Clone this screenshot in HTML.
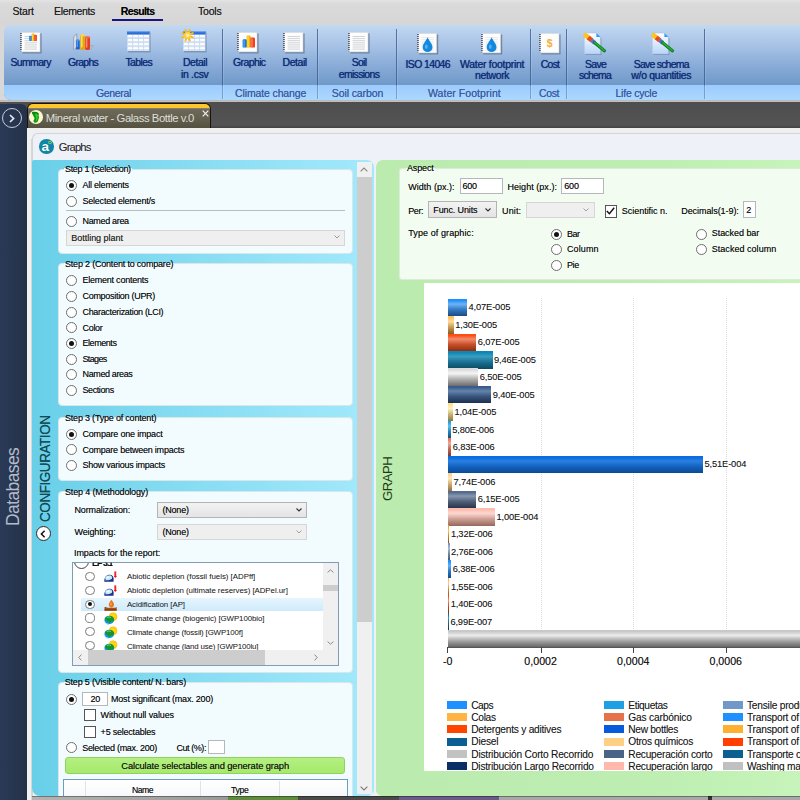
<!DOCTYPE html>
<html lang="en"><head><meta charset="utf-8"><title>Graphs</title>
<style>
html,body{margin:0;padding:0;}
body{width:800px;height:800px;overflow:hidden;background:#d8d8d8;font-family:"Liberation Sans",sans-serif;}
#root{position:relative;width:800px;height:800px;overflow:hidden;}
.a{position:absolute;box-sizing:border-box;}
.t{position:absolute;white-space:nowrap;font-family:"Liberation Sans",sans-serif;text-shadow:0 0 .45px rgba(0,0,0,.5);}
.v{position:absolute;white-space:nowrap;transform-origin:0 0;transform:rotate(-90deg);font-family:"Liberation Sans",sans-serif;}
.rb{position:absolute;box-sizing:border-box;border-radius:50%;border:1.15px solid #6e6e6e;background:#fff;}
.rb.on::after{content:"";position:absolute;left:50%;top:50%;width:5px;height:5px;margin:-2.5px 0 0 -2.5px;border-radius:50%;background:#111;}
.gb{position:absolute;box-sizing:border-box;background:#f2fbfe;border:1px solid #d9e6ea;border-radius:4px;}
.cb{position:absolute;box-sizing:border-box;background:#fff;border:1px solid #555;}
.tb{position:absolute;box-sizing:border-box;background:#fff;border:1px solid #b4b8bc;}
.combo{position:absolute;box-sizing:border-box;border:1px solid #b4b4b4;background:linear-gradient(#f3f3f3,#e4e4e4);}
.combo.dis{border-color:#d6d6d6;background:#efefef;}
svg{position:absolute;overflow:visible;}
.rb.sm{border-width:1px;border-color:#7a7a7a;}
.rb.sm.on::after{width:4px;height:4px;margin:-2px 0 0 -2px;}
</style></head><body>
<div id="root">
<div class="a " style="left:0px;top:0px;width:800px;height:26px;background:linear-gradient(#e3e3e3 0,#dadada 4px,#d6d6d6 100%);"></div>
<div class="a " style="left:112px;top:19.3px;width:51px;height:1.7px;background:#15158a;"></div>
<div class="a " style="left:4px;top:24.6px;width:796px;height:75.1px;border-radius:6px 0 0 7px;background:linear-gradient(#c2d8f2 0px,#a8c3e6 20px,#8aacd8 40px,#6f99c9 60px,#6f99c9 100%);"></div>
<div class="a " style="left:4px;top:85.2px;width:796px;height:14.5px;border-radius:0 0 0 7px;background:linear-gradient(#9ccafb,#acd8ff);"></div>
<div class="a " style="left:222.0px;top:29px;width:1.0px;height:69.6px;background:linear-gradient(rgba(58,92,148,.8) 0,rgba(58,92,148,.8) 56px,rgba(96,136,196,.7) 57px);"></div>
<div class="a " style="left:223.0px;top:29px;width:1.0px;height:69.8px;background:rgba(255,255,255,.12);"></div>
<div class="a " style="left:317.0px;top:29px;width:1.0px;height:69.6px;background:linear-gradient(rgba(58,92,148,.8) 0,rgba(58,92,148,.8) 56px,rgba(96,136,196,.7) 57px);"></div>
<div class="a " style="left:318.0px;top:29px;width:1.0px;height:69.8px;background:rgba(255,255,255,.12);"></div>
<div class="a " style="left:396.25px;top:29px;width:1.0px;height:69.6px;background:linear-gradient(rgba(58,92,148,.8) 0,rgba(58,92,148,.8) 56px,rgba(96,136,196,.7) 57px);"></div>
<div class="a " style="left:397.25px;top:29px;width:1.0px;height:69.8px;background:rgba(255,255,255,.12);"></div>
<div class="a " style="left:530.0px;top:29px;width:1.0px;height:69.6px;background:linear-gradient(rgba(58,92,148,.8) 0,rgba(58,92,148,.8) 56px,rgba(96,136,196,.7) 57px);"></div>
<div class="a " style="left:531.0px;top:29px;width:1.0px;height:69.8px;background:rgba(255,255,255,.12);"></div>
<div class="a " style="left:565.75px;top:29px;width:1.0px;height:69.6px;background:linear-gradient(rgba(58,92,148,.8) 0,rgba(58,92,148,.8) 56px,rgba(96,136,196,.7) 57px);"></div>
<div class="a " style="left:566.75px;top:29px;width:1.0px;height:69.8px;background:rgba(255,255,255,.12);"></div>
<div class="a " style="left:703.5px;top:29px;width:1.0px;height:69.6px;background:linear-gradient(rgba(58,92,148,.8) 0,rgba(58,92,148,.8) 56px,rgba(96,136,196,.7) 57px);"></div>
<div class="a " style="left:704.5px;top:29px;width:1.0px;height:69.8px;background:rgba(255,255,255,.12);"></div>
<svg style="left:20px;top:31.6px" width="23" height="23.5" viewBox="0 0 23 23.5"><rect x="2.2" y="1.4" width="19.4" height="20.1" fill="#5f7391" opacity=".75"/><rect x="1.2" y=".4" width="18.8" height="19.5" fill="#fdfdfd"/><rect x="1.2" y=".4" width="18.8" height="19.5" fill="none" stroke="#d2d6dc" stroke-width=".6"/><line x1=".9" y1="1.00" x2=".9" y2="19.3" stroke="#5c6068" stroke-width="1.8" stroke-dasharray="1 1"/><line x1="4.6" y1="4.5" x2="17" y2="4.5" stroke="#c4c8cc" stroke-width=".8"/><line x1="4.6" y1="6.6" x2="17" y2="6.6" stroke="#c4c8cc" stroke-width=".8"/><line x1="4.6" y1="8.7" x2="17" y2="8.7" stroke="#c4c8cc" stroke-width=".8"/><line x1="4.6" y1="10.8" x2="17" y2="10.8" stroke="#c4c8cc" stroke-width=".8"/><line x1="4.6" y1="12.9" x2="17" y2="12.9" stroke="#c4c8cc" stroke-width=".8"/><line x1="4.6" y1="15.0" x2="17" y2="15.0" stroke="#c4c8cc" stroke-width=".8"/><line x1="4.6" y1="17.1" x2="17" y2="17.1" stroke="#c4c8cc" stroke-width=".8"/><rect x="9.2" y="3.8" width="2.7" height="5.2" rx="0.7" fill="#1a78d8"/><rect x="9.6" y="4.2" width="1.0" height="4.6" rx="0.4" fill="#5cb0f4" opacity=".75"/><rect x="11.7" y="1.6" width="2.6" height="7.4" rx="0.7" fill="#f4b800"/><rect x="12.1" y="2.0" width="0.9" height="6.8" rx="0.4" fill="#fce46c" opacity=".75"/><rect x="14.0" y="2.8" width="2.9" height="6.2" rx="0.7" fill="#f0401c"/><rect x="14.5" y="3.2" width="1.0" height="5.6" rx="0.4" fill="#fc8c64" opacity=".75"/></svg>
<svg style="left:73.4px;top:33.2px" width="22.400000000000002" height="20.160000000000004" viewBox="0 0 20 18"><path d="M.6 14.6 L.6 3.6 L3.4 .6 L3.4 11.6 L18 11.6 L15.4 14.6Z" fill="#dfe3ea" stroke="#8892a4" stroke-width=".7"/><path d="M3.4 11.6 L18 11.6 L15.4 14.8 L.6 14.8Z" fill="#b4bccb"/><rect x="2.6" y="6.6" width="3.4" height="7" fill="#1c64d0"/><rect x="3.2" y="6.6" width="1.2" height="7" fill="#6cacf4" opacity=".8"/><ellipse cx="4.3" cy="13.6" rx="1.7" ry="1.1" fill="#1c64d0"/><ellipse cx="4.3" cy="6.6" rx="1.7" ry="1.1" fill="#4c90e8"/><rect x="6.4" y="2" width="4.2" height="11.8" fill="#e4a800"/><rect x="7.0" y="2" width="1.5" height="11.8" fill="#fce888" opacity=".8"/><ellipse cx="8.5" cy="13.8" rx="2.1" ry="1.1" fill="#e4a800"/><ellipse cx="8.5" cy="2" rx="2.1" ry="1.1" fill="#f8d458"/><rect x="10.8" y="3.8" width="4.4" height="10.2" fill="#e43c1c"/><rect x="11.4" y="3.8" width="1.5" height="10.2" fill="#fc9c7c" opacity=".8"/><ellipse cx="13.0" cy="14.0" rx="2.2" ry="1.1" fill="#e43c1c"/><ellipse cx="13.0" cy="3.8" rx="2.2" ry="1.1" fill="#f46c4c"/></svg>
<svg style="left:126.8px;top:31.3px" width="24.6" height="23" viewBox="0 0 24.6 23"><rect x="1" y="1.4" width="22.6" height="20" fill="#5f7391" opacity=".55"/><rect x="0" y="0" width="22.6" height="20" fill="#b4cbea"/><rect x="0" y="0" width="22.6" height="3.4" fill="#2a6ed8"/><rect x="0" y="0" width="22.6" height="1.2" fill="#6ca4f0"/><rect x="0.60" y="4.00" width="4.80" height="3.35" fill="#ffffff"/><rect x="0.60" y="5.84" width="4.80" height="1.51" fill="#d4e2f4"/><rect x="6.10" y="4.00" width="4.80" height="3.35" fill="#ffffff"/><rect x="6.10" y="5.84" width="4.80" height="1.51" fill="#d4e2f4"/><rect x="11.60" y="4.00" width="4.80" height="3.35" fill="#ffffff"/><rect x="11.60" y="5.84" width="4.80" height="1.51" fill="#d4e2f4"/><rect x="17.10" y="4.00" width="4.80" height="3.35" fill="#ffffff"/><rect x="17.10" y="5.84" width="4.80" height="1.51" fill="#d4e2f4"/><rect x="0.60" y="8.05" width="4.80" height="3.35" fill="#ffffff"/><rect x="0.60" y="9.89" width="4.80" height="1.51" fill="#d4e2f4"/><rect x="6.10" y="8.05" width="4.80" height="3.35" fill="#ffffff"/><rect x="6.10" y="9.89" width="4.80" height="1.51" fill="#d4e2f4"/><rect x="11.60" y="8.05" width="4.80" height="3.35" fill="#ffffff"/><rect x="11.60" y="9.89" width="4.80" height="1.51" fill="#d4e2f4"/><rect x="17.10" y="8.05" width="4.80" height="3.35" fill="#ffffff"/><rect x="17.10" y="9.89" width="4.80" height="1.51" fill="#d4e2f4"/><rect x="0.60" y="12.10" width="4.80" height="3.35" fill="#ffffff"/><rect x="0.60" y="13.94" width="4.80" height="1.51" fill="#d4e2f4"/><rect x="6.10" y="12.10" width="4.80" height="3.35" fill="#ffffff"/><rect x="6.10" y="13.94" width="4.80" height="1.51" fill="#d4e2f4"/><rect x="11.60" y="12.10" width="4.80" height="3.35" fill="#ffffff"/><rect x="11.60" y="13.94" width="4.80" height="1.51" fill="#d4e2f4"/><rect x="17.10" y="12.10" width="4.80" height="3.35" fill="#ffffff"/><rect x="17.10" y="13.94" width="4.80" height="1.51" fill="#d4e2f4"/><rect x="0.60" y="16.15" width="4.80" height="3.35" fill="#ffffff"/><rect x="0.60" y="17.99" width="4.80" height="1.51" fill="#d4e2f4"/><rect x="6.10" y="16.15" width="4.80" height="3.35" fill="#ffffff"/><rect x="6.10" y="17.99" width="4.80" height="1.51" fill="#d4e2f4"/><rect x="11.60" y="16.15" width="4.80" height="3.35" fill="#ffffff"/><rect x="11.60" y="17.99" width="4.80" height="1.51" fill="#d4e2f4"/><rect x="17.10" y="16.15" width="4.80" height="3.35" fill="#ffffff"/><rect x="17.10" y="17.99" width="4.80" height="1.51" fill="#d4e2f4"/></svg>
<svg style="left:183px;top:31.3px" width="24.6" height="23" viewBox="0 0 24.6 23"><rect x="1" y="1.4" width="22.6" height="20" fill="#5f7391" opacity=".55"/><rect x="0" y="0" width="22.6" height="20" fill="#b4cbea"/><rect x="0" y="0" width="22.6" height="3.4" fill="#2a6ed8"/><rect x="0" y="0" width="22.6" height="1.2" fill="#6ca4f0"/><rect x="0.60" y="4.00" width="4.80" height="3.35" fill="#ffffff"/><rect x="0.60" y="5.84" width="4.80" height="1.51" fill="#d4e2f4"/><rect x="6.10" y="4.00" width="4.80" height="3.35" fill="#ffffff"/><rect x="6.10" y="5.84" width="4.80" height="1.51" fill="#d4e2f4"/><rect x="11.60" y="4.00" width="4.80" height="3.35" fill="#ffffff"/><rect x="11.60" y="5.84" width="4.80" height="1.51" fill="#d4e2f4"/><rect x="17.10" y="4.00" width="4.80" height="3.35" fill="#ffffff"/><rect x="17.10" y="5.84" width="4.80" height="1.51" fill="#d4e2f4"/><rect x="0.60" y="8.05" width="4.80" height="3.35" fill="#ffffff"/><rect x="0.60" y="9.89" width="4.80" height="1.51" fill="#d4e2f4"/><rect x="6.10" y="8.05" width="4.80" height="3.35" fill="#ffffff"/><rect x="6.10" y="9.89" width="4.80" height="1.51" fill="#d4e2f4"/><rect x="11.60" y="8.05" width="4.80" height="3.35" fill="#ffffff"/><rect x="11.60" y="9.89" width="4.80" height="1.51" fill="#d4e2f4"/><rect x="17.10" y="8.05" width="4.80" height="3.35" fill="#ffffff"/><rect x="17.10" y="9.89" width="4.80" height="1.51" fill="#d4e2f4"/><rect x="0.60" y="12.10" width="4.80" height="3.35" fill="#ffffff"/><rect x="0.60" y="13.94" width="4.80" height="1.51" fill="#d4e2f4"/><rect x="6.10" y="12.10" width="4.80" height="3.35" fill="#ffffff"/><rect x="6.10" y="13.94" width="4.80" height="1.51" fill="#d4e2f4"/><rect x="11.60" y="12.10" width="4.80" height="3.35" fill="#ffffff"/><rect x="11.60" y="13.94" width="4.80" height="1.51" fill="#d4e2f4"/><rect x="17.10" y="12.10" width="4.80" height="3.35" fill="#ffffff"/><rect x="17.10" y="13.94" width="4.80" height="1.51" fill="#d4e2f4"/><rect x="0.60" y="16.15" width="4.80" height="3.35" fill="#ffffff"/><rect x="0.60" y="17.99" width="4.80" height="1.51" fill="#d4e2f4"/><rect x="6.10" y="16.15" width="4.80" height="3.35" fill="#ffffff"/><rect x="6.10" y="17.99" width="4.80" height="1.51" fill="#d4e2f4"/><rect x="11.60" y="16.15" width="4.80" height="3.35" fill="#ffffff"/><rect x="11.60" y="17.99" width="4.80" height="1.51" fill="#d4e2f4"/><rect x="17.10" y="16.15" width="4.80" height="3.35" fill="#ffffff"/><rect x="17.10" y="17.99" width="4.80" height="1.51" fill="#d4e2f4"/><line x1="4.6" y1="4.2" x2="9.77" y2="6.34" stroke="#fbb822" stroke-width="2" stroke-linecap="round"/><line x1="4.6" y1="4.2" x2="6.74" y2="9.37" stroke="#fbb822" stroke-width="2" stroke-linecap="round"/><line x1="4.6" y1="4.2" x2="2.46" y2="9.37" stroke="#fbb822" stroke-width="2" stroke-linecap="round"/><line x1="4.6" y1="4.2" x2="-0.57" y2="6.34" stroke="#fbb822" stroke-width="2" stroke-linecap="round"/><line x1="4.6" y1="4.2" x2="-0.57" y2="2.06" stroke="#fbb822" stroke-width="2" stroke-linecap="round"/><line x1="4.6" y1="4.2" x2="2.46" y2="-0.97" stroke="#fbb822" stroke-width="2" stroke-linecap="round"/><line x1="4.6" y1="4.2" x2="6.74" y2="-0.97" stroke="#fbb822" stroke-width="2" stroke-linecap="round"/><line x1="4.6" y1="4.2" x2="9.77" y2="2.06" stroke="#fbb822" stroke-width="2" stroke-linecap="round"/><circle cx="4.6" cy="4.2" r="3.4" fill="#ffcf3a"/><circle cx="4.6" cy="4.2" r="1.7" fill="#fff0a8"/></svg>
<svg style="left:237.4px;top:31.6px" width="23" height="23.5" viewBox="0 0 23 23.5"><rect x="2.2" y="1.4" width="19.4" height="20.1" fill="#5f7391" opacity=".75"/><rect x="1.2" y=".4" width="18.8" height="19.5" fill="#fdfdfd"/><rect x="1.2" y=".4" width="18.8" height="19.5" fill="none" stroke="#d2d6dc" stroke-width=".6"/><line x1=".9" y1="1.00" x2=".9" y2="19.3" stroke="#5c6068" stroke-width="1.8" stroke-dasharray="1 1"/><rect x="5.6" y="7.2" width="4.4" height="8.4" rx="1.2" fill="#1a78d8"/><rect x="6.3" y="7.8" width="1.5" height="7.4" rx="0.6" fill="#5cb0f4" opacity=".75"/><rect x="9.6" y="3.6" width="4.2" height="12.0" rx="1.2" fill="#f4b800"/><rect x="10.3" y="4.2" width="1.5" height="11.0" rx="0.6" fill="#fce46c" opacity=".75"/><rect x="13.4" y="5.6" width="4.6" height="10.0" rx="1.2" fill="#f0401c"/><rect x="14.1" y="6.2" width="1.6" height="9.0" rx="0.6" fill="#fc8c64" opacity=".75"/></svg>
<svg style="left:283.2px;top:31.6px" width="23" height="23.5" viewBox="0 0 23 23.5"><rect x="2.2" y="1.4" width="19.4" height="20.1" fill="#5f7391" opacity=".75"/><rect x="1.2" y=".4" width="18.8" height="19.5" fill="#fdfdfd"/><rect x="1.2" y=".4" width="18.8" height="19.5" fill="none" stroke="#d2d6dc" stroke-width=".6"/><line x1=".9" y1="1.00" x2=".9" y2="19.3" stroke="#5c6068" stroke-width="1.8" stroke-dasharray="1 1"/><line x1="4.6" y1="4.5" x2="17" y2="4.5" stroke="#c4c8cc" stroke-width=".8"/><line x1="4.6" y1="6.6" x2="17" y2="6.6" stroke="#c4c8cc" stroke-width=".8"/><line x1="4.6" y1="8.7" x2="17" y2="8.7" stroke="#c4c8cc" stroke-width=".8"/><line x1="4.6" y1="10.8" x2="17" y2="10.8" stroke="#c4c8cc" stroke-width=".8"/><line x1="4.6" y1="12.9" x2="17" y2="12.9" stroke="#c4c8cc" stroke-width=".8"/><line x1="4.6" y1="15.0" x2="17" y2="15.0" stroke="#c4c8cc" stroke-width=".8"/><line x1="4.6" y1="17.1" x2="17" y2="17.1" stroke="#c4c8cc" stroke-width=".8"/></svg>
<svg style="left:347.6px;top:31.6px" width="23" height="23.5" viewBox="0 0 23 23.5"><rect x="2.2" y="1.4" width="19.4" height="20.1" fill="#5f7391" opacity=".75"/><rect x="1.2" y=".4" width="18.8" height="19.5" fill="#fdfdfd"/><rect x="1.2" y=".4" width="18.8" height="19.5" fill="none" stroke="#d2d6dc" stroke-width=".6"/><line x1=".9" y1="1.00" x2=".9" y2="19.3" stroke="#5c6068" stroke-width="1.8" stroke-dasharray="1 1"/><line x1="4.6" y1="4.5" x2="17" y2="4.5" stroke="#c4c8cc" stroke-width=".8"/><line x1="4.6" y1="6.6" x2="17" y2="6.6" stroke="#c4c8cc" stroke-width=".8"/><line x1="4.6" y1="8.7" x2="17" y2="8.7" stroke="#c4c8cc" stroke-width=".8"/><line x1="4.6" y1="10.8" x2="17" y2="10.8" stroke="#c4c8cc" stroke-width=".8"/><line x1="4.6" y1="12.9" x2="17" y2="12.9" stroke="#c4c8cc" stroke-width=".8"/><line x1="4.6" y1="15.0" x2="17" y2="15.0" stroke="#c4c8cc" stroke-width=".8"/><line x1="4.6" y1="17.1" x2="17" y2="17.1" stroke="#c4c8cc" stroke-width=".8"/></svg>
<svg style="left:416.8px;top:33.3px" width="22.6" height="23.5" viewBox="0 0 22.6 23.5"><rect x="2.2" y="1.4" width="19.0" height="20.1" fill="#5f7391" opacity=".75"/><rect x="1.2" y=".4" width="18.400000000000002" height="19.5" fill="#fdfdfd"/><rect x="1.2" y=".4" width="18.400000000000002" height="19.5" fill="none" stroke="#d2d6dc" stroke-width=".6"/><line x1=".9" y1="1.00" x2=".9" y2="19.3" stroke="#5c6068" stroke-width="1.8" stroke-dasharray="1 1"/><line x1="4.6" y1="4.5" x2="16.6" y2="4.5" stroke="#dfe2e6" stroke-width=".8"/><line x1="4.6" y1="6.6" x2="16.6" y2="6.6" stroke="#dfe2e6" stroke-width=".8"/><line x1="4.6" y1="8.7" x2="16.6" y2="8.7" stroke="#dfe2e6" stroke-width=".8"/><line x1="4.6" y1="10.8" x2="16.6" y2="10.8" stroke="#dfe2e6" stroke-width=".8"/><line x1="4.6" y1="12.9" x2="16.6" y2="12.9" stroke="#dfe2e6" stroke-width=".8"/><line x1="4.6" y1="15.0" x2="16.6" y2="15.0" stroke="#dfe2e6" stroke-width=".8"/><line x1="4.6" y1="17.1" x2="16.6" y2="17.1" stroke="#dfe2e6" stroke-width=".8"/><path d="M10.6 4.4 C13.048 8.752 15.495999999999999 11.2 15.495999999999999 14.192 A4.896 4.896 0 0 1 5.704 14.192 C5.704 11.2 8.152 8.752 10.6 4.4Z" fill="#1488dc"/><ellipse cx="9.299999999999999" cy="13.648000000000001" rx="1.4" ry="2.2" fill="#5cc0fc" opacity=".8"/></svg>
<svg style="left:481.2px;top:33.3px" width="22.6" height="23.5" viewBox="0 0 22.6 23.5"><rect x="2.2" y="1.4" width="19.0" height="20.1" fill="#5f7391" opacity=".75"/><rect x="1.2" y=".4" width="18.400000000000002" height="19.5" fill="#fdfdfd"/><rect x="1.2" y=".4" width="18.400000000000002" height="19.5" fill="none" stroke="#d2d6dc" stroke-width=".6"/><line x1=".9" y1="1.00" x2=".9" y2="19.3" stroke="#5c6068" stroke-width="1.8" stroke-dasharray="1 1"/><line x1="4.6" y1="4.5" x2="16.6" y2="4.5" stroke="#dfe2e6" stroke-width=".8"/><line x1="4.6" y1="6.6" x2="16.6" y2="6.6" stroke="#dfe2e6" stroke-width=".8"/><line x1="4.6" y1="8.7" x2="16.6" y2="8.7" stroke="#dfe2e6" stroke-width=".8"/><line x1="4.6" y1="10.8" x2="16.6" y2="10.8" stroke="#dfe2e6" stroke-width=".8"/><line x1="4.6" y1="12.9" x2="16.6" y2="12.9" stroke="#dfe2e6" stroke-width=".8"/><line x1="4.6" y1="15.0" x2="16.6" y2="15.0" stroke="#dfe2e6" stroke-width=".8"/><line x1="4.6" y1="17.1" x2="16.6" y2="17.1" stroke="#dfe2e6" stroke-width=".8"/><path d="M10.6 4.4 C13.048 8.752 15.495999999999999 11.2 15.495999999999999 14.192 A4.896 4.896 0 0 1 5.704 14.192 C5.704 11.2 8.152 8.752 10.6 4.4Z" fill="#1488dc"/><ellipse cx="9.299999999999999" cy="13.648000000000001" rx="1.4" ry="2.2" fill="#5cc0fc" opacity=".8"/></svg>
<svg style="left:538.8px;top:33.3px" width="23" height="23.5" viewBox="0 0 23 23.5"><rect x="2.2" y="1.4" width="19.4" height="20.1" fill="#5f7391" opacity=".75"/><rect x="1.2" y=".4" width="18.8" height="19.5" fill="#fdfdfd"/><rect x="1.2" y=".4" width="18.8" height="19.5" fill="none" stroke="#d2d6dc" stroke-width=".6"/><line x1=".9" y1="1.00" x2=".9" y2="19.3" stroke="#5c6068" stroke-width="1.8" stroke-dasharray="1 1"/><text x="10.6" y="13.8" font-family="Liberation Sans, sans-serif" font-size="10.5" font-weight="bold" fill="#f8ac34" text-anchor="middle">$</text></svg>
<svg style="left:583.4px;top:31.8px" width="24" height="24" viewBox="0 0 24 24"><defs><linearGradient id="pg1" x1="0" y1="0" x2="0" y2="1"><stop offset="0" stop-color="#ffffff"/><stop offset="1" stop-color="#b8d4f8"/></linearGradient></defs><path d="M2.2 2 L14 2 L18.4 6.2 L18.4 23 L2.2 23Z" fill="#5f7391" opacity=".6"/><path d="M1.2 1 L13.4 1 L17.4 5 L17.4 22 L1.2 22Z" fill="url(#pg1)" stroke="#a8c0e0" stroke-width=".6"/><path d="M13.4 1 L17.4 5 L13.4 5Z" fill="#2c9cf0"/><line x1="2.6" y1="3.4" x2="5.4" y2="5.7" stroke="#fcc41c" stroke-width="4.8" stroke-linecap="round"/><line x1="5.2" y1="5.5" x2="8.8" y2="8.4" stroke="#e84c1c" stroke-width="4.6"/><line x1="8.6" y1="8.3" x2="11.8" y2="10.9" stroke="#4c70cc" stroke-width="4"/><line x1="11.6" y1="10.7" x2="21.4" y2="18.7" stroke="#0c7c1c" stroke-width="3.2" stroke-linecap="round"/><line x1="11.6" y1="10.5" x2="21.2" y2="18.3" stroke="#2cac3c" stroke-width="1.6" stroke-linecap="round"/></svg>
<svg style="left:650.6px;top:31.8px" width="24" height="24" viewBox="0 0 24 24"><defs><linearGradient id="pg2" x1="0" y1="0" x2="0" y2="1"><stop offset="0" stop-color="#ffffff"/><stop offset="1" stop-color="#b8d4f8"/></linearGradient></defs><path d="M2.2 2 L14 2 L18.4 6.2 L18.4 23 L2.2 23Z" fill="#5f7391" opacity=".6"/><path d="M1.2 1 L13.4 1 L17.4 5 L17.4 22 L1.2 22Z" fill="url(#pg2)" stroke="#a8c0e0" stroke-width=".6"/><path d="M13.4 1 L17.4 5 L13.4 5Z" fill="#2c9cf0"/><line x1="2.6" y1="3.4" x2="5.4" y2="5.7" stroke="#fcc41c" stroke-width="4.8" stroke-linecap="round"/><line x1="5.2" y1="5.5" x2="8.8" y2="8.4" stroke="#e84c1c" stroke-width="4.6"/><line x1="8.6" y1="8.3" x2="11.8" y2="10.9" stroke="#4c70cc" stroke-width="4"/><line x1="11.6" y1="10.7" x2="21.4" y2="18.7" stroke="#0c7c1c" stroke-width="3.2" stroke-linecap="round"/><line x1="11.6" y1="10.5" x2="21.2" y2="18.3" stroke="#2cac3c" stroke-width="1.6" stroke-linecap="round"/></svg>
<div class="a " style="left:0px;top:99.6px;width:800px;height:3.0px;background:linear-gradient(#b4b4b4,#c4c4c4 45%,#a0a0a0 80%,#6a6a6a);"></div>
<div class="a " style="left:0px;top:102.4px;width:800px;height:26.0px;background:linear-gradient(#4e4e4e,#535353 90%,#404040);"></div>
<div class="a " style="left:0px;top:103.5px;width:26.6px;height:696.5px;background:linear-gradient(90deg,#2a3a56,#243149);border-radius:0 6px 0 0;"></div>
<div class="a " style="left:1.5px;top:108px;width:20.0px;height:20px;border-radius:50%;border:1px solid #c8ccd6;"></div>
<svg style="left:7.5px;top:113.5px" width="8" height="9" viewBox="0 0 8 9"><path d="M2 1 L5.6 4.5 L2 8" fill="none" stroke="#e8e8ee" stroke-width="1.7"/></svg>
<div class="a " style="left:27px;top:103px;width:184px;height:25px;border-radius:6px 6px 0 0;background:#15140f;"></div>
<div class="a " style="left:27.5px;top:104px;width:182.5px;height:24px;border-radius:5px 5px 0 0;background:#fcc62c;"></div>
<div class="a " style="left:27.5px;top:107.8px;width:182.5px;height:20.2px;background:linear-gradient(#8c897a 0,#6c6858 1.6px,#656150 50%,#555141 100%);"></div>
<div class="a " style="left:28.7px;top:110.2px;width:14.4px;height:13.8px;border-radius:50%;background:radial-gradient(circle at 45% 45%,#fffbe0 0,#fbf5c8 70%,#d8d09c 100%);"></div>
<svg style="left:28px;top:110px" width="16" height="14" viewBox="0 0 16 14"><path d="M4 2.2 C5.6 1.4 8.8 2 10.6 3.2 C11.2 4 10.8 4.6 10.4 5 C11.2 6.4 11 8.2 10.4 9.6 C10 11.2 9.4 12.6 7.8 12.8 C6.2 13 5.2 12 5.6 10.6 C6 9.6 6.8 9 6.4 7.8 C6 6.6 5 6 5 4.8 C4.2 4.2 3.6 3 4 2.2Z" fill="#0d940d"/><path d="M7.4 3.6 C9 3.8 10 4.6 9.8 6 C9.6 7.4 9.8 8.6 9 10 C8.6 11 8 11.6 7.4 11.4 C8 10 8.4 8.6 8 7.2 C7.8 6 7 5 7.4 3.6Z" fill="#34cc34"/><path d="M4.4 2.6 C6 2.2 8.4 2.6 10 3.6" stroke="#0a7a0a" stroke-width=".9" fill="none"/></svg>
<svg style="left:201.5px;top:109.5px" width="7" height="7" viewBox="0 0 7 7"><path d="M.7 .7 L6.3 6.3 M6.3 .7 L.7 6.3" stroke="#f0f0f0" stroke-width="1.2"/></svg>
<div class="a " style="left:26.6px;top:128px;width:773.4px;height:672px;background:#efefef;"></div>
<div class="a " style="left:31.5px;top:133px;width:768.5px;height:667px;background:#eef1f8;border-radius:6px 0 0 0;border-left:1px solid #d2d4d8;border-top:1px solid #d2d4d8;"></div>
<div class="v" style="left:2px;top:526px;font-size:17.5px;line-height:22px;color:#b4bccb;letter-spacing:-0.6px;">Databases</div>
<div class="a " style="left:39px;top:139px;width:14.5px;height:14.5px;border-radius:50%;background:#0e86a6;"></div>
<div class="a " style="left:48.3px;top:140.6px;width:3.6px;height:3.6px;border-radius:50%;border:1px solid #9be04a;"></div>
<div class="a " style="left:32px;top:160px;width:342px;height:635.6px;border-radius:2px 7px 7px 8px;background:linear-gradient(90deg,#68cfe8 0%,#80daf0 35%,#a3e9fc 100%);"></div>
<div class="v" style="left:35.9px;top:522px;font-size:13.6px;line-height:16px;color:#154a52;letter-spacing:-0.5px;transform:rotate(-90deg) scale(1,1.14);text-shadow:0 0 .6px rgba(21,74,82,.8);">CONFIGURATION</div>
<div class="a " style="left:35.8px;top:526.2px;width:15.0px;height:15.0px;border-radius:50%;background:#fff;border:1.2px solid #2a2a2a;"></div>
<svg style="left:40.2px;top:530px" width="6" height="8" viewBox="0 0 6 8"><path d="M4.6 .8 L1.4 4 L4.6 7.2" fill="none" stroke="#111" stroke-width="1.5"/></svg>
<div class="a " style="left:357px;top:162px;width:14.5px;height:632px;background:#f0f0f0;"></div>
<div class="a " style="left:357px;top:176.5px;width:14.5px;height:445.1px;background:#cdcdcd;"></div>
<svg style="left:360.2px;top:167px" width="8" height="5" viewBox="0 0 8 5"><path d="M.6 4.4 L4 1 L7.4 4.4" fill="none" stroke="#868686" stroke-width="1.1"/></svg>
<svg style="left:360.2px;top:785.5px" width="8" height="5" viewBox="0 0 8 5"><path d="M.6 .6 L4 4 L7.4 .6" fill="none" stroke="#7a7a7a" stroke-width="1.1"/></svg>
<div class="gb" style="left:57.5px;top:168.5px;width:295.5px;height:85.5px;"></div>
<div class="a " style="left:63px;top:164px;width:70px;height:11px;background:linear-gradient(#8fe0f4 0,#8fe0f4 4.5px,#f2fbfe 4.5px);display:none;"></div>
<div class="rb on" style="left:65.75px;top:179.85px;width:11.0px;height:11.0px;"></div>
<div class="rb" style="left:65.75px;top:195.6px;width:11.0px;height:11.0px;"></div>
<div class="a " style="left:65.5px;top:210.3px;width:279.0px;height:1.0px;background:#b9bcbe;"></div>
<div class="rb" style="left:65.75px;top:215.85px;width:11.0px;height:11.0px;"></div>
<div class="combo dis" style="left:65.5px;top:229.5px;width:279px;height:16.2px;"></div>
<svg style="left:333.5px;top:235.2px" width="6" height="4" viewBox="0 0 6 4"><path d="M.5 .5 L3 3 L5.5 .5" fill="none" stroke="#9a9a9a" stroke-width="1"/></svg>
<div class="gb" style="left:57.5px;top:263.2px;width:295.5px;height:142.60000000000002px;"></div>
<div class="rb" style="left:65.75px;top:274.85px;width:11.0px;height:11.0px;"></div>
<div class="rb" style="left:65.75px;top:290.6px;width:11.0px;height:11.0px;"></div>
<div class="rb" style="left:65.75px;top:306.6px;width:11.0px;height:11.0px;"></div>
<div class="rb" style="left:65.75px;top:322.35px;width:11.0px;height:11.0px;"></div>
<div class="rb on" style="left:65.75px;top:338.05px;width:11.0px;height:11.0px;"></div>
<div class="rb" style="left:65.75px;top:353.85px;width:11.0px;height:11.0px;"></div>
<div class="rb" style="left:65.75px;top:369.25px;width:11.0px;height:11.0px;"></div>
<div class="rb" style="left:65.75px;top:384.85px;width:11.0px;height:11.0px;"></div>
<div class="gb" style="left:57.5px;top:417px;width:295.5px;height:64px;"></div>
<div class="rb on" style="left:65.75px;top:428.6px;width:11.0px;height:11.0px;"></div>
<div class="rb" style="left:65.75px;top:444.35px;width:11.0px;height:11.0px;"></div>
<div class="rb" style="left:65.75px;top:459.85px;width:11.0px;height:11.0px;"></div>
<div class="gb" style="left:57.5px;top:490.8px;width:295.5px;height:182.59999999999997px;"></div>
<div class="combo" style="left:157px;top:502.2px;width:150px;height:16px;"></div>
<svg style="left:295.5px;top:507.6px" width="6" height="4" viewBox="0 0 6 4"><path d="M.5 .5 L3 3 L5.5 .5" fill="none" stroke="#333" stroke-width="1.1"/></svg>
<div class="combo dis" style="left:157px;top:524.2px;width:150px;height:15.4px;"></div>
<svg style="left:295.5px;top:529.6px" width="6" height="4" viewBox="0 0 6 4"><path d="M.5 .5 L3 3 L5.5 .5" fill="none" stroke="#a0a0a0" stroke-width="1"/></svg>
<div class="a " style="left:72px;top:562.3px;width:266.6px;height:103.5px;background:#fff;border:1px solid #7f9db9;overflow:hidden;"><div class="a" style="left:1.2px;top:-9.4px;width:15px;height:15px;border-radius:50%;border:1.2px solid #444;"></div></div>
<div class="a " style="left:80.6px;top:597.8px;width:242.4px;height:13.5px;background:linear-gradient(#e6f5fe,#cfeafb);"></div>
<div class="rb sm" style="left:85.35000000000001px;top:571.6500000000001px;width:9.2px;height:9.2px;"></div>
<svg style="left:104.2px;top:569px" width="14" height="14" viewBox="0 0 14 14"><path d="M.5 12.7 C.2 9.4 1.4 6.6 4.6 5.8 C7.8 5.2 9.7 7.4 9.7 10 L9.5 12.7Z" fill="#1f2f86"/><path d="M.5 12.7 C.3 10.6 .8 8.8 2 7.4 L3 12.7Z" fill="#4a5cc0"/><ellipse cx="4.7" cy="8.8" rx="3.5" ry="2.3" transform="rotate(-14 4.7 8.8)" fill="#c2ecf9"/><ellipse cx="4" cy="8.4" rx="1.6" ry="1" transform="rotate(-14 4 8.4)" fill="#eafaff"/><path d="M11.3 2.4 V8" stroke="#f02424" stroke-width="1.9" fill="none"/><path d="M9.7 6.9 L11.3 9 L12.9 6.9Z" fill="#e81c1c"/></svg>
<div class="rb sm" style="left:85.35000000000001px;top:585.5500000000001px;width:9.2px;height:9.2px;"></div>
<svg style="left:104.2px;top:583px" width="14" height="14" viewBox="0 0 14 14"><path d="M.5 12.7 C.2 9.4 1.4 6.6 4.6 5.8 C7.8 5.2 9.7 7.4 9.7 10 L9.5 12.7Z" fill="#1f2f86"/><path d="M.5 12.7 C.3 10.6 .8 8.8 2 7.4 L3 12.7Z" fill="#4a5cc0"/><ellipse cx="4.7" cy="8.8" rx="3.5" ry="2.3" transform="rotate(-14 4.7 8.8)" fill="#c2ecf9"/><ellipse cx="4" cy="8.4" rx="1.6" ry="1" transform="rotate(-14 4 8.4)" fill="#eafaff"/><path d="M11.3 2.4 V8" stroke="#f02424" stroke-width="1.9" fill="none"/><path d="M9.7 6.9 L11.3 9 L12.9 6.9Z" fill="#e81c1c"/></svg>
<div class="rb on sm" style="left:85.35000000000001px;top:599.6500000000001px;width:9.2px;height:9.2px;"></div>
<svg style="left:104.2px;top:597px" width="14" height="14" viewBox="0 0 14 14"><path d="M7.4 2.7 C8.6 4.6 10 5.8 10 7.4 A2.6 2.6 0 0 1 4.8 7.4 C4.8 5.8 6.2 4.6 7.4 2.7Z" fill="#ee7416"/><ellipse cx="7" cy="7" rx="1.1" ry="1.7" fill="#fca050" opacity=".8"/><path d="M.5 13.6 V10.2 C1.6 9.6 2.4 10.6 3.6 10.8 C5 11 6 10.5 7.4 10.5 C8.8 10.5 9.8 11 11.2 10.8 C12.2 10.6 12.7 9.7 12.7 9.7 V13.6Z" fill="#a4500f"/><path d="M.5 13.6 V12.4 H12.7 V13.6Z" fill="#7c3608"/></svg>
<div class="rb sm" style="left:85.35000000000001px;top:613.45px;width:9.2px;height:9.2px;"></div>
<svg style="left:104.2px;top:611px" width="14" height="14" viewBox="0 0 14 14"><circle cx="9.1" cy="5.7" r="3.9" fill="#ffd60a" stroke="#f8ac10" stroke-width=".6"/><ellipse cx="5.3" cy="8.9" rx="4.9" ry="4.2" fill="#1b8fe4"/><path d="M1 7.2 C2.2 5.4 4.6 4.6 6.8 5 C8.8 5.4 10 7 10.1 8.6 C10.2 10.4 8.6 10.6 7.6 10.4 C6.4 10.2 6 11.4 5.2 12.6 C4.4 11.6 3.8 10 2.6 9.6 C1.4 9.2 .6 8.4 1 7.2Z" fill="#12982a"/><path d="M3 6.6 C4.2 5.8 5.8 5.8 7 6.6" stroke="#8ce09a" stroke-width=".8" fill="none"/><path d="M.9 10.8 C1.6 12.4 3.2 13.2 5 13.1" stroke="#5cc4fc" stroke-width=".9" fill="none"/></svg>
<div class="rb sm" style="left:85.35000000000001px;top:627.25px;width:9.2px;height:9.2px;"></div>
<svg style="left:104.2px;top:625px" width="14" height="14" viewBox="0 0 14 14"><circle cx="9.1" cy="5.7" r="3.9" fill="#ffd60a" stroke="#f8ac10" stroke-width=".6"/><ellipse cx="5.3" cy="8.9" rx="4.9" ry="4.2" fill="#1b8fe4"/><path d="M1 7.2 C2.2 5.4 4.6 4.6 6.8 5 C8.8 5.4 10 7 10.1 8.6 C10.2 10.4 8.6 10.6 7.6 10.4 C6.4 10.2 6 11.4 5.2 12.6 C4.4 11.6 3.8 10 2.6 9.6 C1.4 9.2 .6 8.4 1 7.2Z" fill="#12982a"/><path d="M3 6.6 C4.2 5.8 5.8 5.8 7 6.6" stroke="#8ce09a" stroke-width=".8" fill="none"/><path d="M.9 10.8 C1.6 12.4 3.2 13.2 5 13.1" stroke="#5cc4fc" stroke-width=".9" fill="none"/></svg>
<div class="rb sm" style="left:85.35000000000001px;top:641.1500000000001px;width:9.2px;height:9.2px;"></div>
<svg style="left:104.2px;top:639px" width="14" height="14" viewBox="0 0 14 14"><circle cx="9.1" cy="5.7" r="3.9" fill="#ffd60a" stroke="#f8ac10" stroke-width=".6"/><ellipse cx="5.3" cy="8.9" rx="4.9" ry="4.2" fill="#1b8fe4"/><path d="M1 7.2 C2.2 5.4 4.6 4.6 6.8 5 C8.8 5.4 10 7 10.1 8.6 C10.2 10.4 8.6 10.6 7.6 10.4 C6.4 10.2 6 11.4 5.2 12.6 C4.4 11.6 3.8 10 2.6 9.6 C1.4 9.2 .6 8.4 1 7.2Z" fill="#12982a"/><path d="M3 6.6 C4.2 5.8 5.8 5.8 7 6.6" stroke="#8ce09a" stroke-width=".8" fill="none"/><path d="M.9 10.8 C1.6 12.4 3.2 13.2 5 13.1" stroke="#5cc4fc" stroke-width=".9" fill="none"/></svg>
<div class="gb" style="left:57.5px;top:682.4px;width:295.5px;height:127.60000000000002px;"></div>
<div class="rb on" style="left:65.5px;top:694.25px;width:11.0px;height:11.0px;"></div>
<div class="tb" style="left:82.2px;top:692px;width:25.8px;height:13.6px;"></div>
<div class="cb" style="left:83.7px;top:709.4px;width:12.2px;height:12px;"></div>
<div class="cb" style="left:83.7px;top:726.2px;width:12.2px;height:12px;"></div>
<div class="rb" style="left:65.5px;top:742.35px;width:11.0px;height:11.0px;"></div>
<div class="tb" style="left:207.6px;top:740.4px;width:17.4px;height:13.6px;"></div>
<div class="a " style="left:65px;top:757.4px;width:279.6px;height:16.2px;background:linear-gradient(#b4f082,#a6e96c);border:1px solid #92d060;border-radius:3px;"></div>
<div class="a " style="left:62.5px;top:779px;width:285.0px;height:21px;background:#fff;border:1px solid #6f9ac4;"></div>
<div class="a " style="left:63.5px;top:780px;width:283.0px;height:20px;background:linear-gradient(#ffffff,#f4f6f8);"></div>
<div class="a " style="left:85.3px;top:780.6px;width:1.0px;height:19.4px;background:#dfe3e8;"></div>
<div class="a " style="left:200px;top:780.6px;width:1px;height:19.4px;background:#dfe3e8;"></div>
<div class="a " style="left:278.7px;top:780.6px;width:1.0px;height:19.4px;background:#dfe3e8;"></div>
<div class="a " style="left:376px;top:160px;width:424px;height:635.6px;border-radius:7px 0 0 7px;background:linear-gradient(90deg,#bbebaf 0%,#bdedb1 60%,#c6f4ba 100%);"></div>
<div class="v" style="left:379.5px;top:500.5px;font-size:13.2px;line-height:15px;color:#1f3a12;letter-spacing:-0.5px;">GRAPH</div>
<div class="a " style="left:399px;top:168.3px;width:401px;height:111.3px;background:#f3fcf1;border:1px solid #dcecd8;border-radius:3px 0 0 3px;border-right:0;"></div>
<div class="tb" style="left:460px;top:177.6px;width:43px;height:16.8px;"></div>
<div class="tb" style="left:561.2px;top:177.6px;width:43.3px;height:16.8px;"></div>
<div class="combo" style="left:427.5px;top:201.3px;width:69.3px;height:16.7px;"></div>
<svg style="left:485px;top:207.6px" width="6" height="4" viewBox="0 0 6 4"><path d="M.5 .5 L3 3 L5.5 .5" fill="none" stroke="#333" stroke-width="1.1"/></svg>
<div class="combo dis" style="left:525.5px;top:201.8px;width:69px;height:15.8px;"></div>
<svg style="left:583px;top:207.6px" width="6" height="4" viewBox="0 0 6 4"><path d="M.5 .5 L3 3 L5.5 .5" fill="none" stroke="#a0a0a0" stroke-width="1"/></svg>
<div class="cb" style="left:604.5px;top:205.4px;width:12.4px;height:12.2px;"></div>
<svg style="left:606.2px;top:207.2px" width="9" height="8" viewBox="0 0 9 8"><path d="M.8 4 L3.4 6.8 L8.2 .8" fill="none" stroke="#111" stroke-width="1.4"/></svg>
<div class="tb" style="left:743px;top:201.3px;width:13.3px;height:16.8px;"></div>
<div class="rb on" style="left:551.0px;top:228.6px;width:11.0px;height:11.0px;"></div>
<div class="rb" style="left:551.0px;top:244.35px;width:11.0px;height:11.0px;"></div>
<div class="rb" style="left:551.0px;top:260.35px;width:11.0px;height:11.0px;"></div>
<div class="rb" style="left:695.5px;top:228.6px;width:11.0px;height:11.0px;"></div>
<div class="rb" style="left:695.5px;top:244.35px;width:11.0px;height:11.0px;"></div>
<div class="a " style="left:423.75px;top:282.5px;width:376.25px;height:488.0px;background:#fff;"></div>
<div class="a " style="left:541.25px;top:298px;width:1.0px;height:349px;background:repeating-linear-gradient(#dcdcdc 0,#dcdcdc 1px,transparent 1px,transparent 2px);"></div>
<div class="a " style="left:633.25px;top:298px;width:1.0px;height:349px;background:repeating-linear-gradient(#dcdcdc 0,#dcdcdc 1px,transparent 1px,transparent 2px);"></div>
<div class="a " style="left:725.75px;top:298px;width:1.0px;height:349px;background:repeating-linear-gradient(#dcdcdc 0,#dcdcdc 1px,transparent 1px,transparent 2px);"></div>
<div class="a " style="left:447.5px;top:298.6px;width:19.5px;height:17.65px;background:linear-gradient(#1e90ff 0%,#1e90ff 8%,#6eb4f4 30%,#347ac4 62%,#1d4a82 100%);"></div>
<div class="a " style="left:447.5px;top:316.05px;width:6.25px;height:17.65px;background:linear-gradient(#ffc060 0%,#ffc060 8%,#ffdc9c 30%,#ca9b54 62%,#8a5c20 100%);"></div>
<div class="a " style="left:447.5px;top:333.5px;width:28.75px;height:17.65px;background:linear-gradient(#ff4d10 0%,#ff4d10 8%,#f08c6c 30%,#c74f29 62%,#8c2c10 100%);"></div>
<div class="a " style="left:447.5px;top:350.95000000000005px;width:45.0px;height:17.65px;background:linear-gradient(#0c88b4 0%,#0c88b4 8%,#3c9cc0 30%,#187192 62%,#0a4860 100%);"></div>
<div class="a " style="left:447.5px;top:368.40000000000003px;width:30.75px;height:17.65px;background:linear-gradient(#dcdcdc 0%,#dcdcdc 8%,#f4f4f4 30%,#b0b0b0 62%,#6c6c6c 100%);"></div>
<div class="a " style="left:447.5px;top:385.85px;width:43.75px;height:17.65px;background:linear-gradient(#3a5c8c 0%,#3a5c8c 8%,#6484ac 30%,#38537a 62%,#1c3050 100%);"></div>
<div class="a " style="left:447.5px;top:403.3px;width:5.5px;height:17.65px;background:linear-gradient(#ffe08c 0%,#ffe08c 8%,#fff0c0 30%,#cbb678 62%,#8c7840 100%);"></div>
<div class="a " style="left:447.5px;top:420.75px;width:3.25px;height:17.65px;background:linear-gradient(#1ea4ec 0%,#1ea4ec 8%,#60c0f0 30%,#2886bc 62%,#0c5080 100%);"></div>
<div class="a " style="left:447.5px;top:438.20000000000005px;width:3.75px;height:17.65px;background:linear-gradient(#e8785c 0%,#e8785c 8%,#f0a898 30%,#bb6857 62%,#80382c 100%);"></div>
<div class="a " style="left:447.5px;top:455.65px;width:255.5px;height:17.65px;background:linear-gradient(#0a6ce4 0%,#0a6ce4 8%,#2a80e0 30%,#1362bf 62%,#0a4a94 100%);"></div>
<div class="a " style="left:447.5px;top:473.1px;width:4.5px;height:17.65px;background:linear-gradient(#ffd488 0%,#ffd488 8%,#ffe8bc 30%,#cdac76 62%,#907040 100%);"></div>
<div class="a " style="left:447.5px;top:490.55px;width:28.75px;height:17.65px;background:linear-gradient(#566c8c 0%,#566c8c 8%,#8898b0 30%,#4f5f77 62%,#283448 100%);"></div>
<div class="a " style="left:447.5px;top:508.0px;width:47.5px;height:17.65px;background:linear-gradient(#fcbcb0 0%,#fcbcb0 8%,#fcd8d0 30%,#cd9e93 62%,#94685c 100%);"></div>
<div class="a " style="left:447.5px;top:525.45px;width:1.8px;height:17.65px;background:linear-gradient(#ff9c20 0%,#ff9c20 8%,#ffc070 30%,#cd842f 62%,#905010 100%);"></div>
<div class="a " style="left:447.5px;top:542.9px;width:2.0px;height:17.65px;background:linear-gradient(#7c98c4 0%,#7c98c4 8%,#a8bcdc 30%,#6d83a5 62%,#405470 100%);"></div>
<div class="a " style="left:447.5px;top:560.35px;width:3.75px;height:17.65px;background:linear-gradient(#1e90ff 0%,#1e90ff 8%,#60b0f8 30%,#2a78ca 62%,#10488c 100%);"></div>
<div class="a " style="left:447.5px;top:577.8px;width:1.8px;height:17.65px;background:linear-gradient(#ffb040 0%,#ffb040 8%,#ffd08c 30%,#cd9546 62%,#906020 100%);"></div>
<div class="a " style="left:447.5px;top:595.25px;width:1.7px;height:17.65px;background:linear-gradient(#ff4410 0%,#ff4410 8%,#f88c6c 30%,#ca4b26 62%,#8c2808 100%);"></div>
<div class="a " style="left:447.5px;top:612.7px;width:1.3px;height:17.65px;background:linear-gradient(#0c6c9c 0%,#0c6c9c 8%,#3c90b4 30%,#176084 62%,#083c58 100%);"></div>
<div class="a " style="left:447.5px;top:630.1500000000001px;width:352.5px;height:17.65px;background:linear-gradient(#c8c8c8 0%,#c8c8c8 8%,#ececec 30%,#a1a1a1 62%,#5c5c5c 100%);"></div>
<div class="a " style="left:447px;top:647px;width:353px;height:1px;background:#555;"></div>
<div class="a " style="left:447.0px;top:647px;width:1.0px;height:5.5px;background:#444;"></div>
<div class="a " style="left:541.25px;top:647px;width:1.0px;height:5.5px;background:#444;"></div>
<div class="a " style="left:633.25px;top:647px;width:1.0px;height:5.5px;background:#444;"></div>
<div class="a " style="left:725.75px;top:647px;width:1.0px;height:5.5px;background:#444;"></div>
<div class="a " style="left:447.2px;top:700.9px;width:19.6px;height:8.0px;background:#1e90ff;"></div>
<div class="a " style="left:447.2px;top:713.1px;width:19.6px;height:8.0px;background:#ffb444;"></div>
<div class="a " style="left:447.2px;top:725.3px;width:19.6px;height:8.0px;background:#ff4500;"></div>
<div class="a " style="left:447.2px;top:737.5px;width:19.6px;height:8.0px;background:#0c5f92;"></div>
<div class="a " style="left:447.2px;top:749.6999999999999px;width:19.6px;height:8.0px;background:#c2c2c2;"></div>
<div class="a " style="left:447.2px;top:761.9px;width:19.6px;height:8.0px;background:#0a2e66;"></div>
<div class="a " style="left:604.2px;top:700.9px;width:19.6px;height:8.0px;background:#1ea0e4;"></div>
<div class="a " style="left:604.2px;top:713.1px;width:19.6px;height:8.0px;background:#e4724c;"></div>
<div class="a " style="left:604.2px;top:725.3px;width:19.6px;height:8.0px;background:#0a5adc;"></div>
<div class="a " style="left:604.2px;top:737.5px;width:19.6px;height:8.0px;background:#ffd084;"></div>
<div class="a " style="left:604.2px;top:749.6999999999999px;width:19.6px;height:8.0px;background:#4a6488;"></div>
<div class="a " style="left:604.2px;top:761.9px;width:19.6px;height:8.0px;background:#ffb8ac;"></div>
<div class="a " style="left:722.95px;top:700.9px;width:19.6px;height:8.0px;background:#7098c8;"></div>
<div class="a " style="left:722.95px;top:713.1px;width:19.6px;height:8.0px;background:#1e90ff;"></div>
<div class="a " style="left:722.95px;top:725.3px;width:19.6px;height:8.0px;background:#ffb030;"></div>
<div class="a " style="left:722.95px;top:737.5px;width:19.6px;height:8.0px;background:#ff4000;"></div>
<div class="a " style="left:722.95px;top:749.6999999999999px;width:19.6px;height:8.0px;background:#0b6090;"></div>
<div class="a " style="left:722.95px;top:761.9px;width:19.6px;height:8.0px;background:#c0c0c0;"></div>
<span class="t" style="left:12.5px;top:4.30px;font-size:10.5px;line-height:15px;color:#1a1a1a;letter-spacing:-0.188px;">Start</span>
<span class="t" style="left:54px;top:4.30px;font-size:10.5px;line-height:15px;color:#1a1a1a;letter-spacing:-0.348px;">Elements</span>
<span class="t" style="left:120.75px;top:4.30px;font-size:10.5px;line-height:15px;color:#000;font-weight:bold;letter-spacing:-0.598px;">Results</span>
<span class="t" style="left:198px;top:4.30px;font-size:10.5px;line-height:15px;color:#1a1a1a;letter-spacing:-0.203px;">Tools</span>
<span class="t" style="left:10.5px;top:55.20px;font-size:10.5px;line-height:15px;color:#0f2c76;letter-spacing:-0.670px;text-shadow:0 0 .7px rgba(15,44,118,.9);">Summary</span>
<span class="t" style="left:68px;top:55.20px;font-size:10.5px;line-height:15px;color:#0f2c76;letter-spacing:-0.740px;text-shadow:0 0 .7px rgba(15,44,118,.9);">Graphs</span>
<span class="t" style="left:125.5px;top:55.20px;font-size:10.5px;line-height:15px;color:#0f2c76;letter-spacing:-0.643px;text-shadow:0 0 .7px rgba(15,44,118,.9);">Tables</span>
<span class="t" style="left:183px;top:55.20px;font-size:10.5px;line-height:15px;color:#0f2c76;letter-spacing:-0.477px;text-shadow:0 0 .7px rgba(15,44,118,.9);">Detail</span>
<span class="t" style="left:181px;top:66.50px;font-size:10.5px;line-height:15px;color:#0f2c76;letter-spacing:-0.324px;text-shadow:0 0 .7px rgba(15,44,118,.9);">in .csv</span>
<span class="t" style="left:233px;top:55.20px;font-size:10.5px;line-height:15px;color:#0f2c76;letter-spacing:-0.609px;text-shadow:0 0 .7px rgba(15,44,118,.9);">Graphic</span>
<span class="t" style="left:282.5px;top:55.20px;font-size:10.5px;line-height:15px;color:#0f2c76;letter-spacing:-0.435px;text-shadow:0 0 .7px rgba(15,44,118,.9);">Detail</span>
<span class="t" style="left:351.75px;top:55.20px;font-size:10.5px;line-height:15px;color:#0f2c76;letter-spacing:-0.754px;text-shadow:0 0 .7px rgba(15,44,118,.9);">Soil</span>
<span class="t" style="left:338.75px;top:66.50px;font-size:10.5px;line-height:15px;color:#0f2c76;letter-spacing:-0.688px;text-shadow:0 0 .7px rgba(15,44,118,.9);">emissions</span>
<span class="t" style="left:405.5px;top:57.20px;font-size:10.5px;line-height:15px;color:#0f2c76;letter-spacing:-0.634px;text-shadow:0 0 .7px rgba(15,44,118,.9);">ISO 14046</span>
<span class="t" style="left:460px;top:57.20px;font-size:10.5px;line-height:15px;color:#0f2c76;letter-spacing:-0.282px;text-shadow:0 0 .7px rgba(15,44,118,.9);">Water footprint</span>
<span class="t" style="left:475px;top:68.00px;font-size:10.5px;line-height:15px;color:#0f2c76;letter-spacing:-0.359px;text-shadow:0 0 .7px rgba(15,44,118,.9);">network</span>
<span class="t" style="left:540.75px;top:57.20px;font-size:10.5px;line-height:15px;color:#0f2c76;letter-spacing:-0.773px;text-shadow:0 0 .7px rgba(15,44,118,.9);">Cost</span>
<span class="t" style="left:585px;top:57.20px;font-size:10.5px;line-height:15px;color:#0f2c76;letter-spacing:-0.734px;text-shadow:0 0 .7px rgba(15,44,118,.9);">Save</span>
<span class="t" style="left:579px;top:68.00px;font-size:10.5px;line-height:15px;color:#0f2c76;letter-spacing:-0.794px;text-shadow:0 0 .7px rgba(15,44,118,.9);">schema</span>
<span class="t" style="left:633.75px;top:57.20px;font-size:10.5px;line-height:15px;color:#0f2c76;letter-spacing:-0.784px;text-shadow:0 0 .7px rgba(15,44,118,.9);">Save schema</span>
<span class="t" style="left:631.25px;top:68.00px;font-size:10.5px;line-height:15px;color:#0f2c76;letter-spacing:-0.301px;text-shadow:0 0 .7px rgba(15,44,118,.9);">w/o quantities</span>
<span class="t" style="left:96px;top:86.00px;font-size:10.5px;line-height:15px;color:#3a5cb0;letter-spacing:-0.337px;">General</span>
<span class="t" style="left:235px;top:86.00px;font-size:10.5px;line-height:15px;color:#3a5cb0;letter-spacing:-0.123px;">Climate change</span>
<span class="t" style="left:331.75px;top:86.00px;font-size:10.5px;line-height:15px;color:#3a5cb0;letter-spacing:-0.094px;">Soil carbon</span>
<span class="t" style="left:428px;top:86.00px;font-size:10.5px;line-height:15px;color:#3a5cb0;letter-spacing:0.052px;">Water Footprint</span>
<span class="t" style="left:539px;top:86.00px;font-size:10.5px;line-height:15px;color:#3a5cb0;letter-spacing:-0.398px;">Cost</span>
<span class="t" style="left:615.5px;top:86.00px;font-size:10.5px;line-height:15px;color:#3a5cb0;letter-spacing:-0.228px;">Life cycle</span>
<span class="t" style="left:45.75px;top:109.70px;font-size:11.3px;line-height:16px;color:#dedfd8;letter-spacing:-0.437px;text-shadow:none;">Mineral water - Galass Bottle v.0</span>
<span class="t" style="left:41.6px;top:136.60px;font-size:13.5px;line-height:19px;color:#fff;font-weight:bold;">a</span>
<span class="t" style="left:58.75px;top:138.70px;font-size:11.2px;line-height:16px;color:#2c2c2c;letter-spacing:-0.823px;text-shadow:0 0 .3px rgba(0,0,0,.3);">Graphs</span>
<span class="t" style="left:65px;top:163.30px;font-size:9px;line-height:13px;color:#0c0c0c;letter-spacing:-0.322px;background:linear-gradient(transparent 0,transparent 5.5px,#f2fbfe 5.5px);padding:0 1px;margin-left:-1px;">Step 1 (Selection)</span>
<span class="t" style="left:82.5px;top:179.00px;font-size:9px;line-height:13px;color:#0c0c0c;letter-spacing:-0.232px;">All elements</span>
<span class="t" style="left:82.5px;top:194.75px;font-size:9px;line-height:13px;color:#0c0c0c;letter-spacing:-0.225px;">Selected element/s</span>
<span class="t" style="left:82.5px;top:215.00px;font-size:9px;line-height:13px;color:#0c0c0c;letter-spacing:-0.328px;">Named area</span>
<span class="t" style="left:71.25px;top:231.80px;font-size:9px;line-height:13px;color:#2a2a2a;letter-spacing:-0.021px;">Bottling plant</span>
<span class="t" style="left:65px;top:257.80px;font-size:9px;line-height:13px;color:#0c0c0c;letter-spacing:-0.197px;background:linear-gradient(transparent 0,transparent 5.5px,#f2fbfe 5.5px);padding:0 1px;margin-left:-1px;">Step 2 (Content to compare)</span>
<span class="t" style="left:82.5px;top:274.00px;font-size:9px;line-height:13px;color:#0c0c0c;letter-spacing:-0.237px;">Element contents</span>
<span class="t" style="left:82.5px;top:289.75px;font-size:9px;line-height:13px;color:#0c0c0c;letter-spacing:-0.296px;">Composition (UPR)</span>
<span class="t" style="left:82.5px;top:305.75px;font-size:9px;line-height:13px;color:#0c0c0c;letter-spacing:-0.331px;">Characterization (LCI)</span>
<span class="t" style="left:82.5px;top:321.50px;font-size:9px;line-height:13px;color:#0c0c0c;letter-spacing:-0.303px;">Color</span>
<span class="t" style="left:82.5px;top:337.20px;font-size:9px;line-height:13px;color:#0c0c0c;letter-spacing:-0.441px;">Elements</span>
<span class="t" style="left:82.5px;top:353.00px;font-size:9px;line-height:13px;color:#0c0c0c;letter-spacing:-0.630px;">Stages</span>
<span class="t" style="left:82.5px;top:368.40px;font-size:9px;line-height:13px;color:#0c0c0c;letter-spacing:-0.366px;">Named areas</span>
<span class="t" style="left:82.5px;top:384.00px;font-size:9px;line-height:13px;color:#0c0c0c;letter-spacing:-0.410px;">Sections</span>
<span class="t" style="left:65px;top:412.00px;font-size:9px;line-height:13px;color:#0c0c0c;letter-spacing:-0.201px;background:linear-gradient(transparent 0,transparent 5.5px,#f2fbfe 5.5px);padding:0 1px;margin-left:-1px;">Step 3 (Type of content)</span>
<span class="t" style="left:82.5px;top:427.75px;font-size:9px;line-height:13px;color:#0c0c0c;letter-spacing:-0.197px;">Compare one impact</span>
<span class="t" style="left:82.5px;top:443.50px;font-size:9px;line-height:13px;color:#0c0c0c;letter-spacing:-0.231px;">Compare between impacts</span>
<span class="t" style="left:82.5px;top:459.00px;font-size:9px;line-height:13px;color:#0c0c0c;letter-spacing:-0.252px;">Show various impacts</span>
<span class="t" style="left:65px;top:485.60px;font-size:9px;line-height:13px;color:#0c0c0c;letter-spacing:-0.153px;background:linear-gradient(transparent 0,transparent 5.5px,#f2fbfe 5.5px);padding:0 1px;margin-left:-1px;">Step 4 (Methodology)</span>
<span class="t" style="left:74.5px;top:504.00px;font-size:9px;line-height:13px;color:#0c0c0c;letter-spacing:-0.145px;">Normalization:</span>
<span class="t" style="left:74.5px;top:526.00px;font-size:9px;line-height:13px;color:#0c0c0c;letter-spacing:-0.136px;">Weighting:</span>
<span class="t" style="left:162.5px;top:504.20px;font-size:9px;line-height:13px;color:#0c0c0c;letter-spacing:-0.211px;">(None)</span>
<span class="t" style="left:162.5px;top:526.00px;font-size:9px;line-height:13px;color:#0c0c0c;letter-spacing:-0.211px;">(None)</span>
<span class="t" style="left:74px;top:547.00px;font-size:9px;line-height:13px;color:#0c0c0c;letter-spacing:-0.076px;">Impacts for the report:</span>
<span class="t" style="left:92px;top:556.70px;font-size:8.6px;line-height:12px;color:#111;font-weight:bold;letter-spacing:-0.805px;clip-path:inset(6px 0 0 0);">EF 3.1</span>
<span class="t" style="left:126.9px;top:571.20px;font-size:7.9px;line-height:11px;color:#111;letter-spacing:-0.021px;text-shadow:none;">Abiotic depletion (fossil fuels) [ADPff]</span>
<span class="t" style="left:126.9px;top:585.10px;font-size:7.9px;line-height:11px;color:#111;letter-spacing:-0.056px;text-shadow:none;">Abiotic depletion (ultimate reserves) [ADPel.ur]</span>
<span class="t" style="left:126.9px;top:599.20px;font-size:7.9px;line-height:11px;color:#111;letter-spacing:-0.062px;text-shadow:none;">Acidification [AP]</span>
<span class="t" style="left:126.9px;top:613.00px;font-size:7.9px;line-height:11px;color:#111;letter-spacing:-0.089px;text-shadow:none;">Climate change (biogenic) [GWP100bio]</span>
<span class="t" style="left:126.9px;top:626.80px;font-size:7.9px;line-height:11px;color:#111;letter-spacing:-0.156px;text-shadow:none;">Climate change (fossil) [GWP100f]</span>
<span class="t" style="left:126.9px;top:640.70px;font-size:7.9px;line-height:11px;color:#111;letter-spacing:-0.148px;text-shadow:none;">Climate change (land use) [GWP100lu]</span>
<span class="t" style="left:64.7px;top:676.30px;font-size:9px;line-height:13px;color:#0c0c0c;letter-spacing:-0.170px;background:linear-gradient(transparent 0,transparent 5.5px,#f2fbfe 5.5px);padding:0 1px;margin-left:-1px;">Step 5 (Visible content/ N. bars)</span>
<span class="t" style="left:90.6px;top:693.30px;font-size:9px;line-height:13px;color:#0c0c0c;letter-spacing:-0.308px;">20</span>
<span class="t" style="left:111px;top:693.40px;font-size:9px;line-height:13px;color:#0c0c0c;letter-spacing:-0.205px;">Most significant (max. 200)</span>
<span class="t" style="left:100.6px;top:708.90px;font-size:9px;line-height:13px;color:#0c0c0c;letter-spacing:-0.113px;">Without null values</span>
<span class="t" style="left:100.6px;top:725.50px;font-size:9px;line-height:13px;color:#0c0c0c;letter-spacing:-0.221px;">+5 selectables</span>
<span class="t" style="left:82.2px;top:741.50px;font-size:9px;line-height:13px;color:#0c0c0c;letter-spacing:-0.308px;">Selected (max. 200)</span>
<span class="t" style="left:176.4px;top:741.50px;font-size:9px;line-height:13px;color:#0c0c0c;letter-spacing:-0.427px;">Cut (%):</span>
<span class="t" style="left:121.25px;top:758.70px;font-size:9.4px;line-height:13px;color:#111;letter-spacing:-0.132px;">Calculate selectables and generate graph</span>
<span class="t" style="left:132px;top:783.60px;font-size:8.6px;line-height:12px;color:#0c0c0c;letter-spacing:-0.484px;">Name</span>
<span class="t" style="left:231px;top:783.60px;font-size:8.6px;line-height:12px;color:#0c0c0c;letter-spacing:-0.310px;">Type</span>
<span class="t" style="left:407px;top:162.20px;font-size:9px;line-height:13px;color:#0c0c0c;letter-spacing:-0.128px;background:linear-gradient(#bcecb0 0,#bcecb0 5.5px,#f3fcf1 5.5px);padding:0 1px;margin-left:-1px;">Aspect</span>
<span class="t" style="left:408.25px;top:180.80px;font-size:9px;line-height:13px;color:#0c0c0c;letter-spacing:0.020px;">Width (px.):</span>
<span class="t" style="left:462.5px;top:179.50px;font-size:9px;line-height:13px;color:#0c0c0c;letter-spacing:-0.260px;">600</span>
<span class="t" style="left:507.5px;top:180.80px;font-size:9px;line-height:13px;color:#0c0c0c;letter-spacing:0.036px;">Height (px.):</span>
<span class="t" style="left:564.25px;top:179.50px;font-size:9px;line-height:13px;color:#0c0c0c;letter-spacing:-0.177px;">600</span>
<span class="t" style="left:408.25px;top:204.80px;font-size:9px;line-height:13px;color:#0c0c0c;letter-spacing:-0.441px;">Per:</span>
<span class="t" style="left:433.25px;top:204.40px;font-size:9px;line-height:13px;color:#0c0c0c;letter-spacing:-0.115px;">Func. Units</span>
<span class="t" style="left:502px;top:204.80px;font-size:9px;line-height:13px;color:#0c0c0c;letter-spacing:0.147px;">Unit:</span>
<span class="t" style="left:621.75px;top:204.80px;font-size:9px;line-height:13px;color:#0c0c0c;letter-spacing:-0.022px;">Scientific n.</span>
<span class="t" style="left:681.25px;top:204.80px;font-size:9px;line-height:13px;color:#0c0c0c;letter-spacing:-0.073px;">Decimals(1-9):</span>
<span class="t" style="left:746.25px;top:203.50px;font-size:9px;line-height:13px;color:#0c0c0c;letter-spacing:-0.516px;">2</span>
<span class="t" style="left:408.25px;top:226.50px;font-size:9px;line-height:13px;color:#0c0c0c;letter-spacing:0.091px;">Type of graphic:</span>
<span class="t" style="left:567px;top:227.50px;font-size:9px;line-height:13px;color:#0c0c0c;letter-spacing:-0.505px;">Bar</span>
<span class="t" style="left:567px;top:243.30px;font-size:9px;line-height:13px;color:#0c0c0c;letter-spacing:0.122px;">Column</span>
<span class="t" style="left:567px;top:259.20px;font-size:9px;line-height:13px;color:#0c0c0c;letter-spacing:-0.422px;">Pie</span>
<span class="t" style="left:711.75px;top:227.00px;font-size:9px;line-height:13px;color:#0c0c0c;letter-spacing:-0.048px;">Stacked bar</span>
<span class="t" style="left:711.75px;top:243.30px;font-size:9px;line-height:13px;color:#0c0c0c;letter-spacing:0.032px;">Stacked column</span>
<span class="t" style="left:468.6px;top:301.43px;font-size:9.3px;line-height:13px;color:#161616;letter-spacing:-0.145px;text-shadow:0 0 .3px rgba(0,0,0,.3);">4,07E-005</span>
<span class="t" style="left:455.35px;top:318.88px;font-size:9.3px;line-height:13px;color:#161616;letter-spacing:-0.145px;text-shadow:0 0 .3px rgba(0,0,0,.3);">1,30E-005</span>
<span class="t" style="left:477.85px;top:336.33px;font-size:9.3px;line-height:13px;color:#161616;letter-spacing:-0.145px;text-shadow:0 0 .3px rgba(0,0,0,.3);">6,07E-005</span>
<span class="t" style="left:494.1px;top:353.78px;font-size:9.3px;line-height:13px;color:#161616;letter-spacing:-0.145px;text-shadow:0 0 .3px rgba(0,0,0,.3);">9,46E-005</span>
<span class="t" style="left:479.85px;top:371.23px;font-size:9.3px;line-height:13px;color:#161616;letter-spacing:-0.145px;text-shadow:0 0 .3px rgba(0,0,0,.3);">6,50E-005</span>
<span class="t" style="left:492.85px;top:388.68px;font-size:9.3px;line-height:13px;color:#161616;letter-spacing:-0.145px;text-shadow:0 0 .3px rgba(0,0,0,.3);">9,40E-005</span>
<span class="t" style="left:454.6px;top:406.13px;font-size:9.3px;line-height:13px;color:#161616;letter-spacing:-0.145px;text-shadow:0 0 .3px rgba(0,0,0,.3);">1,04E-005</span>
<span class="t" style="left:452.35px;top:423.58px;font-size:9.3px;line-height:13px;color:#161616;letter-spacing:-0.145px;text-shadow:0 0 .3px rgba(0,0,0,.3);">5,80E-006</span>
<span class="t" style="left:452.85px;top:441.03px;font-size:9.3px;line-height:13px;color:#161616;letter-spacing:-0.145px;text-shadow:0 0 .3px rgba(0,0,0,.3);">6,83E-006</span>
<span class="t" style="left:704.6px;top:458.48px;font-size:9.3px;line-height:13px;color:#161616;letter-spacing:-0.145px;text-shadow:0 0 .3px rgba(0,0,0,.3);">5,51E-004</span>
<span class="t" style="left:453.6px;top:475.93px;font-size:9.3px;line-height:13px;color:#161616;letter-spacing:-0.145px;text-shadow:0 0 .3px rgba(0,0,0,.3);">7,74E-006</span>
<span class="t" style="left:477.85px;top:493.38px;font-size:9.3px;line-height:13px;color:#161616;letter-spacing:-0.145px;text-shadow:0 0 .3px rgba(0,0,0,.3);">6,15E-005</span>
<span class="t" style="left:496.6px;top:510.83px;font-size:9.3px;line-height:13px;color:#161616;letter-spacing:-0.145px;text-shadow:0 0 .3px rgba(0,0,0,.3);">1,00E-004</span>
<span class="t" style="left:450.90000000000003px;top:528.28px;font-size:9.3px;line-height:13px;color:#161616;letter-spacing:-0.145px;text-shadow:0 0 .3px rgba(0,0,0,.3);">1,32E-006</span>
<span class="t" style="left:451.1px;top:545.73px;font-size:9.3px;line-height:13px;color:#161616;letter-spacing:-0.145px;text-shadow:0 0 .3px rgba(0,0,0,.3);">2,76E-006</span>
<span class="t" style="left:452.85px;top:563.18px;font-size:9.3px;line-height:13px;color:#161616;letter-spacing:-0.145px;text-shadow:0 0 .3px rgba(0,0,0,.3);">6,38E-006</span>
<span class="t" style="left:450.90000000000003px;top:580.62px;font-size:9.3px;line-height:13px;color:#161616;letter-spacing:-0.145px;text-shadow:0 0 .3px rgba(0,0,0,.3);">1,55E-006</span>
<span class="t" style="left:450.8px;top:598.08px;font-size:9.3px;line-height:13px;color:#161616;letter-spacing:-0.145px;text-shadow:0 0 .3px rgba(0,0,0,.3);">1,40E-006</span>
<span class="t" style="left:450.40000000000003px;top:615.53px;font-size:9.3px;line-height:13px;color:#161616;letter-spacing:-0.145px;text-shadow:0 0 .3px rgba(0,0,0,.3);">6,99E-007</span>
<span class="t" style="left:443px;top:654.30px;font-size:10.6px;line-height:15px;color:#1a1a1a;letter-spacing:0.039px;">-0</span>
<span class="t" style="left:524.25px;top:654.30px;font-size:10.6px;line-height:15px;color:#1a1a1a;letter-spacing:0.057px;">0,0002</span>
<span class="t" style="left:617px;top:654.30px;font-size:10.6px;line-height:15px;color:#1a1a1a;letter-spacing:0.016px;">0,0004</span>
<span class="t" style="left:709.5px;top:654.30px;font-size:10.6px;line-height:15px;color:#1a1a1a;letter-spacing:0.016px;">0,0006</span>
<span class="t" style="left:471.25px;top:698.70px;font-size:10.2px;line-height:14px;color:#1a1a1a;letter-spacing:-0.512px;text-shadow:0 0 .3px rgba(0,0,0,.3);">Caps</span>
<span class="t" style="left:471.25px;top:710.90px;font-size:10.2px;line-height:14px;color:#1a1a1a;letter-spacing:-0.309px;text-shadow:0 0 .3px rgba(0,0,0,.3);">Colas</span>
<span class="t" style="left:471.25px;top:723.10px;font-size:10.2px;line-height:14px;color:#1a1a1a;letter-spacing:-0.245px;text-shadow:0 0 .3px rgba(0,0,0,.3);">Detergents y aditives</span>
<span class="t" style="left:471.25px;top:735.30px;font-size:10.2px;line-height:14px;color:#1a1a1a;letter-spacing:-0.219px;text-shadow:0 0 .3px rgba(0,0,0,.3);">Diesel</span>
<span class="t" style="left:471.25px;top:747.50px;font-size:10.2px;line-height:14px;color:#1a1a1a;letter-spacing:-0.213px;text-shadow:0 0 .3px rgba(0,0,0,.3);">Distribución Corto Recorrido</span>
<span class="t" style="left:471.25px;top:759.70px;font-size:10.2px;line-height:14px;color:#1a1a1a;letter-spacing:-0.236px;text-shadow:0 0 .3px rgba(0,0,0,.3);">Distribución Largo Recorrido</span>
<span class="t" style="left:628.25px;top:698.70px;font-size:10.2px;line-height:14px;color:#1a1a1a;letter-spacing:-0.359px;text-shadow:0 0 .3px rgba(0,0,0,.3);">Etiquetas</span>
<span class="t" style="left:628.25px;top:710.90px;font-size:10.2px;line-height:14px;color:#1a1a1a;letter-spacing:-0.168px;text-shadow:0 0 .3px rgba(0,0,0,.3);">Gas carbónico</span>
<span class="t" style="left:628.25px;top:723.10px;font-size:10.2px;line-height:14px;color:#1a1a1a;letter-spacing:-0.317px;text-shadow:0 0 .3px rgba(0,0,0,.3);">New bottles</span>
<span class="t" style="left:628.25px;top:735.30px;font-size:10.2px;line-height:14px;color:#1a1a1a;letter-spacing:-0.269px;text-shadow:0 0 .3px rgba(0,0,0,.3);">Otros químicos</span>
<span class="t" style="left:628.25px;top:747.50px;font-size:10.2px;line-height:14px;color:#1a1a1a;letter-spacing:-0.227px;text-shadow:0 0 .3px rgba(0,0,0,.3);">Recuperación corto</span>
<span class="t" style="left:628.25px;top:759.70px;font-size:10.2px;line-height:14px;color:#1a1a1a;letter-spacing:-0.228px;text-shadow:0 0 .3px rgba(0,0,0,.3);">Recuperación largo</span>
<span class="t" style="left:747px;top:698.70px;font-size:10.2px;line-height:14px;color:#1a1a1a;letter-spacing:-0.230px;text-shadow:0 0 .3px rgba(0,0,0,.3);">Tensile products</span>
<span class="t" style="left:747px;top:710.90px;font-size:10.2px;line-height:14px;color:#1a1a1a;letter-spacing:-0.227px;text-shadow:0 0 .3px rgba(0,0,0,.3);">Transport of</span>
<span class="t" style="left:747px;top:723.10px;font-size:10.2px;line-height:14px;color:#1a1a1a;letter-spacing:-0.227px;text-shadow:0 0 .3px rgba(0,0,0,.3);">Transport of</span>
<span class="t" style="left:747px;top:735.30px;font-size:10.2px;line-height:14px;color:#1a1a1a;letter-spacing:-0.227px;text-shadow:0 0 .3px rgba(0,0,0,.3);">Transport of</span>
<span class="t" style="left:747px;top:747.50px;font-size:10.2px;line-height:14px;color:#1a1a1a;letter-spacing:-0.237px;text-shadow:0 0 .3px rgba(0,0,0,.3);">Transporte c</span>
<span class="t" style="left:747px;top:759.70px;font-size:10.2px;line-height:14px;color:#1a1a1a;letter-spacing:-0.269px;text-shadow:0 0 .3px rgba(0,0,0,.3);">Washing machine</span>
<div class="a" style="left:73px;top:650.3px;width:264.6px;height:14.5px;background:#f0f0f0;"></div>
<div class="a" style="left:87.5px;top:650.3px;width:177.2px;height:14.5px;background:#cdcdcd;"></div>
<svg style="left:78.3px;top:654px" width="4" height="7" viewBox="0 0 4 7"><path d="M3.4 .6 L.8 3.5 L3.4 6.4" fill="none" stroke="#8a8a8a" stroke-width="1"/></svg>
<svg style="left:313.8px;top:654px" width="4" height="7" viewBox="0 0 4 7"><path d="M.6 .6 L3.2 3.5 L.6 6.4" fill="none" stroke="#8a8a8a" stroke-width="1"/></svg>
<div class="a" style="left:323.3px;top:563.3px;width:14.3px;height:87px;background:#f0f0f0;"></div>
<div class="a" style="left:323.3px;top:584.8px;width:14.3px;height:6.4px;background:#cdcdcd;"></div>
<svg style="left:327px;top:568.6px" width="7" height="4" viewBox="0 0 7 4"><path d="M.6 3.4 L3.5 .8 L6.4 3.4" fill="none" stroke="#8a8a8a" stroke-width="1"/></svg>
<svg style="left:327px;top:640.8px" width="7" height="4" viewBox="0 0 7 4"><path d="M.6 .6 L3.5 3.2 L6.4 .6" fill="none" stroke="#8a8a8a" stroke-width="1"/></svg>
<div class="a" style="left:26.6px;top:795.6px;width:774px;height:4.4px;background:linear-gradient(90deg,#b4b4b4 0,#9a9a9a 26%,#5c8c3c 26%,#5c8c3c 35%,#4a4a4a 35%,#4a4a4a 48%,#6a5a8a 48%,#6a5a8a 61%,#a8a8a8 61%,#a8a8a8 88%,#333 88%,#333 88.5%,#a8a8a8 88.5%);"></div>
<div class="a" style="left:26.6px;top:795.6px;width:774px;height:1.2px;background:rgba(0,0,0,.35);"></div>
<div class="a" style="left:26.6px;top:128px;width:5px;height:672px;background:#f1f1f1;"></div>
<div class="a" style="left:30.6px;top:139px;width:1.4px;height:661px;background:#d6d6d8;"></div>
<div class="a" style="left:376px;top:770.5px;width:424px;height:25.1px;background:linear-gradient(90deg,#bbebaf 0%,#bdedb1 60%,#c6f4ba 100%);border-radius:0 0 0 7px;"></div>
</div>
</body></html>
